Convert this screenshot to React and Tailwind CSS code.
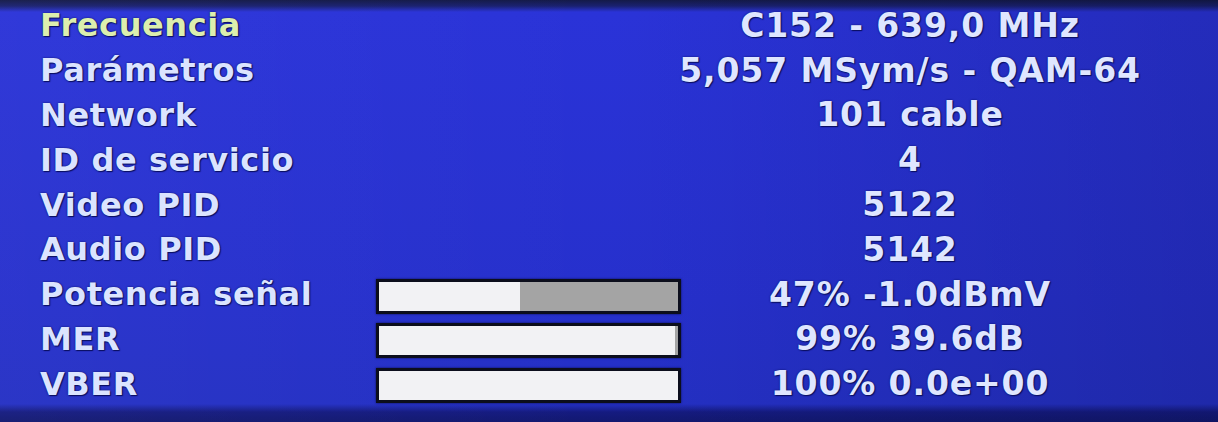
const rows = [
    { label: 'Frecuencia', value: 'C152 - 639,0 MHz', active: true },
    { label: 'Parámetros', value: '5,057 MSym/s - QAM-64' },
    { label: 'Network', value: '101 cable' },
    { label: 'ID de servicio', value: '4' },
    { label: 'Video PID', value: '5122' },
    { label: 'Audio PID', value: '5142' },
    { label: 'Potencia señal', value: '47% -1.0dBmV', bar: 47 },
    { label: 'MER', value: '99% 39.6dB', bar: 99 },
    { label: 'VBER', value: '100% 0.0e+00', bar: 100 },
]

function Bar({ pct }) {
    return (
        <div className="mt-[4px] h-[35px] w-[305px] border-[3px] border-[#0c0e1c] bg-[#a4a4a4] flex shadow-[0_0_2px_#0a0f50]">
            <div className="h-full bg-[#f2f2f4]" style={{ width: pct + '%' }} />
        </div>
    )
}

export default function App() {
    return (
        <div className="w-[1218px] h-[422px] overflow-hidden font-['DejaVu_Sans',sans-serif] font-bold bg-[linear-gradient(to_bottom,#141a48_0px,#1a2170_6px,#2a33d8_12px,#2630cc_300px,#2430c4_404px,#151b80_412px,#121870_422px)]">
            <div className="h-full bg-[linear-gradient(to_right,rgba(255,255,255,0.03),rgba(0,0,0,0)_50%,rgba(0,0,20,0.15))] pt-[3px]">
                {rows.map((r) => (
                    <div key={r.label} className="h-[44.8px] flex items-center whitespace-nowrap leading-none [text-shadow:0_0_2px_#0a0f60,1px_1px_1px_#0a0f60]">
                        <div className={`w-[376px] shrink-0 pl-[40px] text-[32px] tracking-[0.6px] ${r.active ? 'text-[#dcefae]' : 'text-[#dbe4ff]'}`}>
                            {r.label}
                        </div>
                        <div className="w-[305px] shrink-0 flex items-center">
                            {r.bar != null && <Bar pct={r.bar} />}
                        </div>
                        <div className="w-[458px] shrink-0 flex justify-center text-[33px] tracking-[0.9px] text-[#dfe6ff]">
                            {r.value}
                        </div>
                    </div>
                ))}
            </div>
        </div>
    )
}
